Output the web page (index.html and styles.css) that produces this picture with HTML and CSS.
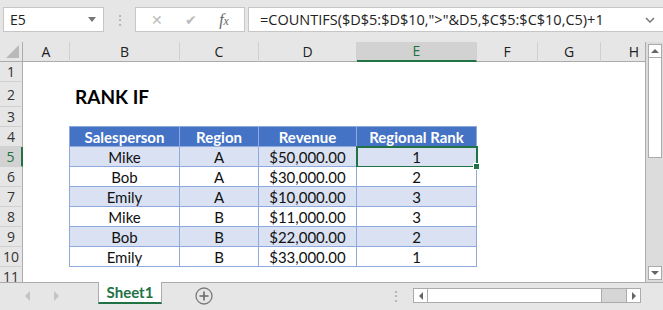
FILE: index.html
```html
<!DOCTYPE html>
<html lang="en">
<head>
    <meta charset="UTF-8">
    <title>RANK IF</title>
    <link rel="stylesheet" href="styles.css">
</head>
<body>
    <div class="window">
        <div class="toolbar">
            <div class="namebox">
                <span>E5</span>
                <span class="caret"></span>
            </div>
            <div class="grip">&#8942;</div>
            <div class="fbuttons">
                <span class="fbtn cancel">&#10005;</span>
                <span class="fbtn enter">&#10004;</span>
                <span class="fbtn fx"><i>f</i><i class="x">x</i></span>
            </div>
            <div class="formula">
                <span>=COUNTIFS($D$5:$D$10,"&gt;"&amp;D5,$C$5:$C$10,C5)+1</span>
                <svg class="expand" width="10" height="6" viewBox="0 0 10 6"><path d="M1 1 L5 5 L9 1" fill="none" stroke="#777" stroke-width="1.5"/></svg>
            </div>
        </div>

        <div class="sheet">
            <div class="grid">
                <div class="corner"><span class="tri"></span></div>
                <div class="colhead">A</div>
                <div class="colhead">B</div>
                <div class="colhead">C</div>
                <div class="colhead">D</div>
                <div class="colhead active">E</div>
                <div class="colhead">F</div>
                <div class="colhead">G</div>
                <div class="colhead last">H</div>

                <div class="rowhead r1">1</div>
                <div class="rowhead r2">2</div>
                <div class="rowhead r3">3</div>
                <div class="rowhead r4">4</div>
                <div class="rowhead r5 active">5</div>
                <div class="rowhead r6">6</div>
                <div class="rowhead r7">7</div>
                <div class="rowhead r8">8</div>
                <div class="rowhead r9">9</div>
                <div class="rowhead r10">10</div>
                <div class="rowhead r11">11</div>

                <div class="title">RANK IF</div>

                <div class="cell th cb r4">Salesperson</div>
                <div class="cell th cc r4">Region</div>
                <div class="cell th cd r4">Revenue</div>
                <div class="cell th ce r4">Regional Rank</div>

                <div class="cell band cb r5">Mike</div>
                <div class="cell band cc r5">A</div>
                <div class="cell band cd r5">$50,000.00</div>
                <div class="cell band ce r5 selected">1</div>

                <div class="cell cb r6">Bob</div>
                <div class="cell cc r6">A</div>
                <div class="cell cd r6">$30,000.00</div>
                <div class="cell ce r6">2</div>

                <div class="cell band cb r7">Emily</div>
                <div class="cell band cc r7">A</div>
                <div class="cell band cd r7">$10,000.00</div>
                <div class="cell band ce r7">3</div>

                <div class="cell cb r8">Mike</div>
                <div class="cell cc r8">B</div>
                <div class="cell cd r8">$11,000.00</div>
                <div class="cell ce r8">3</div>

                <div class="cell band cb r9">Bob</div>
                <div class="cell band cc r9">B</div>
                <div class="cell band cd r9">$22,000.00</div>
                <div class="cell band ce r9">2</div>

                <div class="cell cb r10">Emily</div>
                <div class="cell cc r10">B</div>
                <div class="cell cd r10">$33,000.00</div>
                <div class="cell ce r10">1</div>
            </div>

            <div class="vscroll">
                <div class="sbtn up"><span class="arrow-up"></span></div>
                <div class="vthumb"></div>
                <div class="vtrack"></div>
                <div class="sbtn down"><span class="arrow-down"></span></div>
            </div>
        </div>

        <div class="tabbar">
            <div class="navs">
                <span class="arrow-left"></span>
                <span class="arrow-right"></span>
            </div>
            <div class="tab">Sheet1</div>
            <div class="addsheet">
                <svg width="18" height="18" viewBox="0 0 18 18"><circle cx="9" cy="9" r="8" fill="none" stroke="#7a7a7a" stroke-width="1.3"/><path d="M9 4.5 V13.5 M4.5 9 H13.5" stroke="#6a6a6a" stroke-width="1.6"/></svg>
            </div>
            <div class="tabgrip">&#8942;</div>
            <div class="hscroll">
                <div class="sbtn left"><span class="arrow-left dark"></span></div>
                <div class="hthumb"></div>
                <div class="htrack"></div>
                <div class="sbtn right"><span class="arrow-right dark"></span></div>
            </div>
        </div>
    </div>
</body>
</html>
```

FILE: styles.css
```css
body {
    margin: 0;
    font-family: "Open Sans", "Noto Sans", sans-serif;
    color: #222;
    background-color: #e6e6e6;
}
.window {
    width: 663px;
    height: 310px;
    overflow: hidden;
    display: flex;
    flex-direction: column;
}

/* formula bar */
.toolbar {
    height: 42px;
    flex: none;
    display: flex;
    align-items: flex-start;
    padding-top: 7px;
    box-sizing: border-box;
    background-color: #e6e6e6;
}
.namebox {
    margin-left: 3px;
    width: 101px;
    height: 25px;
    box-sizing: border-box;
    background-color: #fff;
    border: 1px solid #c6c6c6;
    display: flex;
    align-items: center;
    justify-content: space-between;
    padding: 0 7px 0 6px;
    font-size: 14px;
    color: #222;
}
.caret {
    width: 0;
    height: 0;
    border-left: 4px solid transparent;
    border-right: 4px solid transparent;
    border-top: 5px solid #777;
}
.grip {
    width: 31px;
    text-align: center;
    color: #aaa;
    font-size: 14px;
    line-height: 25px;
}
.fbuttons {
    width: 110px;
    height: 25px;
    box-sizing: border-box;
    background-color: #fff;
    border: 1px solid #c6c6c6;
    display: flex;
    align-items: center;
    justify-content: space-around;
    padding: 0 4px;
}
.fbtn {
    color: #bcbcbc;
    font-size: 14px;
}
.fbtn.fx {
    color: #666;
    font-family: "Liberation Serif", serif;
    font-size: 16px;
}
.fbtn.fx .x {
    font-size: 12px;
}
.formula {
    margin-left: 3px;
    flex: 1;
    height: 25px;
    box-sizing: border-box;
    background-color: #fff;
    border: 1px solid #c6c6c6;
    border-right: none;
    display: flex;
    align-items: center;
    justify-content: space-between;
    padding: 0 8px 0 11px;
    font-size: 14.5px;
    color: #222;
    white-space: nowrap;
}

/* sheet area */
.sheet {
    height: 240px;
    flex: none;
    display: flex;
    background-color: #fff;
}
.grid {
    width: 645px;
    display: grid;
    grid-template-columns: 23px 47px 110px 79px 98px 120px 61px 63px 44px;
    grid-template-rows: 20px 20px 25px 20px 20px 20px 20px 20px 20px 20px 20px 20px 15px;
    overflow: hidden;
}
.corner {
    background-color: #e6e6e6;
    border-right: 1px solid #ababab;
    border-bottom: 1px solid #ababab;
    position: relative;
}
.tri {
    position: absolute;
    right: 3px;
    bottom: 3px;
    width: 0;
    height: 0;
    border-left: 13px solid transparent;
    border-bottom: 13px solid #b9b9b9;
}
.colhead {
    background-color: #e6e6e6;
    border-right: 1px solid #d0d0d0;
    border-bottom: 1px solid #ababab;
    text-align: center;
    font-size: 14px;
    line-height: 19px;
    color: #222;
}
.colhead.last {
    border-right: none;
    text-align: right;
    padding-right: 6px;
}
.colhead.active {
    background-color: #d2d2d2;
    color: #217346;
    border-bottom: 2px solid #217346;
    line-height: 18px;
}
.rowhead {
    grid-column: 1;
    background-color: #e6e6e6;
    border-right: 1px solid #ababab;
    border-bottom: 1px solid #d0d0d0;
    text-align: center;
    font-size: 14px;
    color: #333;
    display: flex;
    align-items: center;
    justify-content: center;
}
.rowhead.active {
    background-color: #d2d2d2;
    color: #217346;
    border-right: 2px solid #217346;
}
.r1 { grid-row: 2; }
.r2 { grid-row: 3; }
.r3 { grid-row: 4; }
.r4 { grid-row: 5; }
.r5 { grid-row: 6; }
.r6 { grid-row: 7; }
.r7 { grid-row: 8; }
.r8 { grid-row: 9; }
.r9 { grid-row: 10; }
.r10 { grid-row: 11; }
.r11 { grid-row: 12 / span 2; align-items: flex-start; }

.title {
    grid-row: 3;
    grid-column: 3 / span 2;
    padding-left: 5px;
    font-family: Lato, "Open Sans", sans-serif;
    font-weight: bold;
    font-size: 19px;
    color: #000;
    display: flex;
    align-items: center;
    padding-top: 3px;
}

/* table */
.cell {
    font-family: Lato, "Open Sans", sans-serif;
    font-size: 15px;
    color: #111;
    text-align: center;
    border-right: 1px solid #8ea9db;
    border-bottom: 1px solid #8ea9db;
    display: flex;
    align-items: center;
    justify-content: center;
    background-color: #fff;
    position: relative;
}
.cb { grid-column: 3; border-left: 1px solid #8ea9db; margin-left: -1px; }
.cc { grid-column: 4; }
.cd { grid-column: 5; }
.ce { grid-column: 6; }
.cell.th {
    background-color: #4472c4;
    color: #fff;
    font-weight: bold;
    border-top: 1px solid #8ea9db;
    margin-top: -1px;
}
.cell.band {
    background-color: #d9e1f2;
}
.cell.selected {
    outline: 2px solid #217346;
    outline-offset: -1px;
}
.cell.selected::after {
    content: "";
    position: absolute;
    right: -4px;
    bottom: -4px;
    width: 5px;
    height: 5px;
    background-color: #217346;
    border: 1px solid #fff;
    z-index: 2;
}

/* scrollbars */
.vscroll {
    width: 18px;
    background-color: #dcdcdc;
    border-left: 1px solid #ababab;
    box-sizing: border-box;
    display: flex;
    flex-direction: column;
    align-items: center;
    padding: 2px 0;
}
.sbtn {
    background-color: #fff;
    border: 1px solid #ababab;
    box-sizing: border-box;
    display: flex;
    align-items: center;
    justify-content: center;
}
.vscroll .sbtn {
    width: 14px;
    height: 14px;
}
.vthumb {
    width: 14px;
    height: 100px;
    background-color: #fff;
    border: 1px solid #ababab;
    border-top: none;
    box-sizing: border-box;
}
.vtrack {
    flex: 1;
}
.arrow-up {
    border-left: 4px solid transparent;
    border-right: 4px solid transparent;
    border-bottom: 4px solid #666;
}
.arrow-down {
    border-left: 4px solid transparent;
    border-right: 4px solid transparent;
    border-top: 4px solid #666;
}
.arrow-left {
    display: inline-block;
    border-top: 5px solid transparent;
    border-bottom: 5px solid transparent;
    border-right: 5px solid #c4c4c4;
}
.arrow-right {
    display: inline-block;
    border-top: 5px solid transparent;
    border-bottom: 5px solid transparent;
    border-left: 5px solid #c4c4c4;
}
.arrow-left.dark {
    border-right-color: #666;
    border-top-width: 4px;
    border-bottom-width: 4px;
    border-right-width: 4px;
}
.arrow-right.dark {
    border-left-color: #666;
    border-top-width: 4px;
    border-bottom-width: 4px;
    border-left-width: 4px;
}

/* sheet tabs */
.tabbar {
    flex: 1;
    display: flex;
    align-items: flex-start;
    background-color: #e6e6e6;
    border-top: 1px solid #ababab;
}
.navs {
    width: 98px;
    display: flex;
    gap: 24px;
    padding-left: 25px;
    box-sizing: border-box;
    height: 26px;
    align-items: center;
}
.tab {
    width: 64px;
    height: 22px;
    margin-top: -1px;
    box-sizing: border-box;
    background-color: #fff;
    border-left: 1px solid #ababab;
    border-right: 1px solid #ababab;
    border-bottom: 2px solid #217346;
    color: #217346;
    font-family: Lato, "Open Sans", sans-serif;
    font-weight: bold;
    font-size: 15px;
    text-align: center;
    line-height: 21px;
}
.addsheet {
    margin-left: 33px;
    margin-top: 4px;
    height: 18px;
}
.tabgrip {
    margin-left: 176px;
    color: #aaa;
    font-size: 14px;
    line-height: 26px;
}
.hscroll {
    margin-left: 10px;
    margin-top: 5px;
    width: 228px;
    height: 15px;
    display: flex;
    background-color: #d6d6d6;
    border: 1px solid #ababab;
    box-sizing: border-box;
}
.hscroll .sbtn {
    width: 14px;
    height: 13px;
    border: none;
}
.hscroll .sbtn.left {
    border-right: 1px solid #ababab;
}
.hscroll .sbtn.right {
    border-left: 1px solid #ababab;
}
.hthumb {
    width: 173px;
    background-color: #fff;
    border-right: 1px solid #ababab;
}
.htrack {
    flex: 1;
}
```
